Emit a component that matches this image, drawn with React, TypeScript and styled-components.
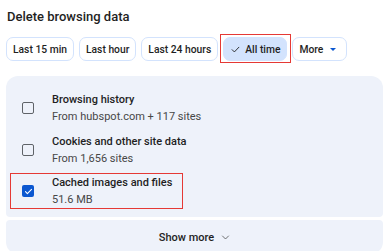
import React from "react";
import styled, { createGlobalStyle, css } from "styled-components";

const Global = createGlobalStyle`
  html, body { margin: 0; padding: 0; background: #ffffff; }
  body { font-family: Roboto, "Liberation Sans", sans-serif; color: #1f1f1f; }
`;

const Page = styled.div`
  width: 383px;
  height: 251px;
  overflow: hidden;
  padding: 8px 0 0 6px;
  box-sizing: border-box;
`;

const Title = styled.h1`
  margin: 0 0 0 1px;
  font-size: 13px;
  font-weight: 500;
  line-height: 18px;
`;

const Chips = styled.div`
  display: flex;
  gap: 5px;
  margin-top: 11px;
  align-items: center;
`;

const annotated = css`
  position: relative;
  &::after {
    content: "";
    position: absolute;
    border: 1.5px solid #e53935;
    pointer-events: none;
  }
`;

const Chip = styled.button<{ $selected?: boolean; $annotated?: boolean }>`
  height: 24px;
  padding: ${(p) => (p.$selected ? "0 6px 0 7px" : "0 6px")};
  border-radius: 7px;
  border: 1px solid #d3e3fd;
  background: ${(p) => (p.$selected ? "#d3e3fd" : "#ffffff")};
  font-family: Roboto, "Liberation Sans", sans-serif;
  font-size: 10.3px;
  font-weight: 500;
  color: #1f1f1f;
  display: flex;
  align-items: center;
  gap: 5px;
  white-space: nowrap;
  cursor: pointer;
  ${(p) =>
    p.$annotated &&
    css`
      ${annotated};
      &::after {
        left: -4px;
        right: -5px;
        top: -4px;
        bottom: -3px;
      }
    `}
`;

const MoreChip = styled(Chip)`
  padding: 0 10px 0 6px;
  gap: 7px;
`;

const Caret = styled.span`
  width: 0;
  height: 0;
  border-left: 3px solid transparent;
  border-right: 3px solid transparent;
  border-top: 3px solid #0b57d0;
`;

const Panel = styled.div`
  margin-top: 15px;
  background: #eef2fa;
  border-radius: 12px 12px 4px 4px;
  padding: 15px 0 9px 0;
  display: flex;
  flex-direction: column;
  gap: 7.5px;
`;

const Row = styled.div<{ $annotated?: boolean }>`
  display: flex;
  align-items: center;
  gap: 18px;
  padding-left: 16px;
  ${(p) =>
    p.$annotated &&
    css`
      ${annotated};
      &::after {
        left: 4px;
        width: 173px;
        top: -1px;
        bottom: -1px;
        box-sizing: border-box;
      }
    `}
`;

const Box = styled.span<{ $checked?: boolean }>`
  width: 12px;
  height: 12px;
  box-sizing: border-box;
  border-radius: 2px;
  border: ${(p) => (p.$checked ? "none" : "1.5px solid #5f6368")};
  background: ${(p) => (p.$checked ? "#0b57d0" : "transparent")};
  display: flex;
  align-items: center;
  justify-content: center;
  flex-shrink: 0;
`;

const Texts = styled.div`
  display: flex;
  flex-direction: column;
`;

const RowTitle = styled.div`
  font-size: 11px;
  font-weight: 500;
  line-height: 17px;
  color: #1f1f1f;
`;

const RowSub = styled.div`
  font-size: 11px;
  line-height: 17px;
  color: #474747;
`;

const Footer = styled.div`
  margin-top: 3px;
  height: 34px;
  flex-shrink: 0;
  background: #eef2fa;
  border-radius: 4px 4px 12px 12px;
  display: flex;
  align-items: center;
  justify-content: center;
  gap: 7px;
  font-size: 11px;
  font-weight: 500;
  color: #1f1f1f;
`;

const Check = () => (
  <svg width="9" height="9" viewBox="0 0 24 24" fill="none">
    <path d="M3 12.5l6 6L21 6" stroke="#1f1f1f" strokeWidth="2.4" strokeLinecap="round" strokeLinejoin="round" />
  </svg>
);

const items = [
  { title: "Browsing history", sub: "From hubspot.com + 117 sites", checked: false },
  { title: "Cookies and other site data", sub: "From 1,656 sites", checked: false },
  { title: "Cached images and files", sub: "51.6 MB", checked: true },
];

export default function App() {
  return (
    <>
      <Global />
      <Page>
        <Title>Delete browsing data</Title>
        <Chips>
          <Chip>Last 15 min</Chip>
          <Chip>Last hour</Chip>
          <Chip>Last 24 hours</Chip>
          <Chip $selected $annotated>
            <Check />
            All time
          </Chip>
          <MoreChip>
            More
            <Caret />
          </MoreChip>
        </Chips>
        <Panel>
          {items.map((it) => (
            <Row key={it.title} $annotated={it.checked}>
              <Box $checked={it.checked}>
                {it.checked && (
                  <svg width="9" height="9" viewBox="0 0 24 24" fill="none">
                    <path d="M4 12.5l5 5L20 6.5" stroke="#ffffff" strokeWidth="3" strokeLinecap="round" strokeLinejoin="round" />
                  </svg>
                )}
              </Box>
              <Texts>
                <RowTitle>{it.title}</RowTitle>
                <RowSub>{it.sub}</RowSub>
              </Texts>
            </Row>
          ))}
        </Panel>
        <Footer>
          Show more
          <svg width="9" height="9" viewBox="0 0 24 24" fill="none">
            <path d="M4 8l8 8 8-8" stroke="#444746" strokeWidth="2" strokeLinecap="round" strokeLinejoin="round" />
          </svg>
        </Footer>
      </Page>
    </>
  );
}
